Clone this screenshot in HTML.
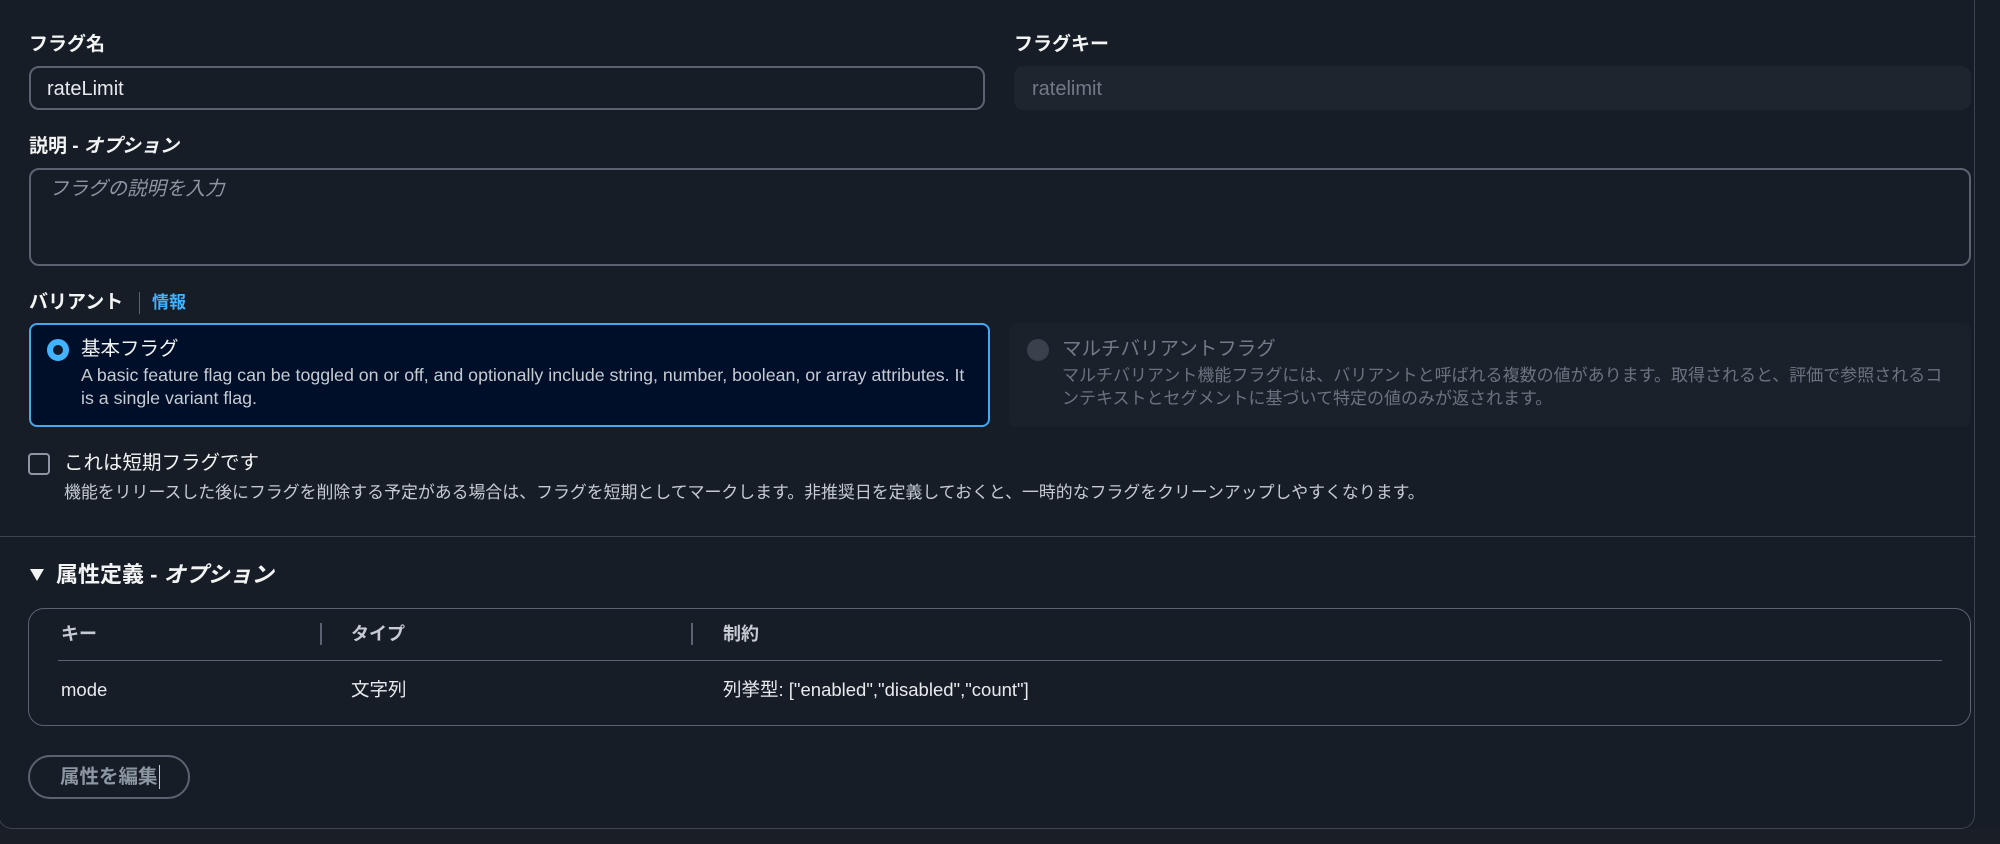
<!DOCTYPE html>
<html><head><meta charset="utf-8"><style>
*{box-sizing:border-box;margin:0;padding:0}
body{width:2000px;height:844px;background:#161d26;font-family:"Liberation Sans","Noto Sans CJK JP",sans-serif;color:#e8eaed;position:relative;overflow:hidden}
.a{position:absolute}
.lbl{font-size:19px;font-weight:bold;line-height:24px;color:#f2f3f3}
.inp{border:2px solid #5b6370;border-radius:10px;background:#161d26}
.desc{font-size:16.5px;line-height:23px;white-space:nowrap}
</style></head><body>
<div class="a" style="left:-2px;top:-10px;width:1977px;height:839px;border:1px solid #3d4450;border-top:none;border-radius:0 0 14px 14px;background:#161d26"></div>
<div class="a" style="left:0;top:829px;width:2000px;height:15px;background:#1a1f27"></div>

<div class="a lbl" style="left:29px;top:33px">フラグ名</div>
<div class="a inp" style="left:29px;top:66px;width:956px;height:44px"></div>
<div class="a" style="left:47px;top:77px;font-size:20px;line-height:24px">rateLimit</div>

<div class="a lbl" style="left:1014px;top:33px">フラグキー</div>
<div class="a" style="left:1014px;top:66px;width:957px;height:44px;background:#1f252f;border-radius:10px"></div>
<div class="a" style="left:1032px;top:77px;font-size:20px;line-height:24px;color:#717a87">ratelimit</div>

<div class="a lbl" style="left:29px;top:135px">説明 - <i>オプション</i></div>
<div class="a inp" style="left:29px;top:168px;width:1942px;height:98px"></div>
<div class="a" style="left:49px;top:177px;font-size:19.5px;line-height:24px;color:#8d96a3;font-style:italic">フラグの説明を入力</div>

<div class="a lbl" style="left:29px;top:291px">バリアント</div>
<div class="a" style="left:139px;top:292px;width:1px;height:22px;background:#5b6370"></div>
<div class="a" style="left:152px;top:292px;font-size:17px;font-weight:bold;color:#42b4ff;line-height:22px">情報</div>

<div class="a" style="left:29px;top:323px;width:961px;height:104px;background:#000f29;border:2px solid #42a8f0;border-radius:8px"></div>
<div class="a" style="left:47px;top:339px;width:22px;height:22px;border-radius:50%;border:6px solid #42b4ff;background:#0f1b2a"></div>
<div class="a" style="left:81px;top:337px;font-size:19.5px;line-height:24px;color:#f2f3f3">基本フラグ</div>
<div class="a desc" style="left:81px;top:364px;color:#c6cbd2;font-size:17.8px">A basic feature flag can be toggled on or off, and optionally include string, number, boolean, or array attributes. It<br>is a single variant flag.</div>

<div class="a" style="left:1009px;top:323px;width:962px;height:104px;background:#1b212b;border-radius:8px"></div>
<div class="a" style="left:1027px;top:339px;width:22px;height:22px;border-radius:50%;background:#3a414d"></div>
<div class="a" style="left:1062px;top:337px;font-size:19.5px;line-height:24px;color:#717a87">マルチバリアントフラグ</div>
<div class="a desc" style="left:1062px;top:364px;color:#6b7380;font-size:17px">マルチバリアント機能フラグには、バリアントと呼ばれる複数の値があります。取得されると、評価で参照されるコ<br>ンテキストとセグメントに基づいて特定の値のみが返されます。</div>

<div class="a" style="left:28px;top:453px;width:22px;height:22px;border:2px solid #8d96a3;border-radius:4px"></div>
<div class="a" style="left:64px;top:451px;font-size:19.5px;line-height:24px;color:#f2f3f3">これは短期フラグです</div>
<div class="a desc" style="left:64px;top:481px;color:#c6cbd2;font-size:16.9px">機能をリリースした後にフラグを削除する予定がある場合は、フラグを短期としてマークします。非推奨日を定義しておくと、一時的なフラグをクリーンアップしやすくなります。</div>

<div class="a" style="left:0;top:536px;width:1976px;height:1px;background:#3d4450"></div>

<div class="a" style="left:30px;top:569px;width:0;height:0;border-left:7px solid transparent;border-right:7px solid transparent;border-top:12px solid #f2f3f3"></div>
<div class="a" style="left:56px;top:561px;font-size:22px;font-weight:bold;line-height:28px;color:#f2f3f3">属性定義 - <i>オプション</i></div>

<div class="a" style="left:28px;top:608px;width:1943px;height:118px;border:1px solid #5b6370;border-radius:16px"></div>
<div class="a" style="left:61px;top:622px;font-size:18px;font-weight:bold;line-height:24px;color:#c6cbd2">キー</div>
<div class="a" style="left:320px;top:623px;width:2px;height:22px;background:#5b6370"></div>
<div class="a" style="left:351px;top:622px;font-size:18px;font-weight:bold;line-height:24px;color:#c6cbd2">タイプ</div>
<div class="a" style="left:691px;top:623px;width:2px;height:22px;background:#5b6370"></div>
<div class="a" style="left:723px;top:622px;font-size:18px;font-weight:bold;line-height:24px;color:#c6cbd2">制約</div>
<div class="a" style="left:58px;top:660px;width:1884px;height:1px;background:#5b6370"></div>
<div class="a" style="left:61px;top:678px;font-size:18.5px;line-height:24px">mode</div>
<div class="a" style="left:351px;top:678px;font-size:18.5px;line-height:24px">文字列</div>
<div class="a" style="left:723px;top:678px;font-size:18.5px;line-height:24px">列挙型: ["enabled","disabled","count"]</div>

<div class="a" style="left:28px;top:755px;width:162px;height:44px;border:2px solid #5b6370;border-radius:22px"></div>
<div class="a" style="left:60px;top:765px;font-size:19.5px;font-weight:bold;line-height:24px;color:#8d96a3">属性を編集</div>
<div class="a" style="left:159px;top:765px;width:1px;height:24px;background:#c6cbd2"></div>
</body></html>
